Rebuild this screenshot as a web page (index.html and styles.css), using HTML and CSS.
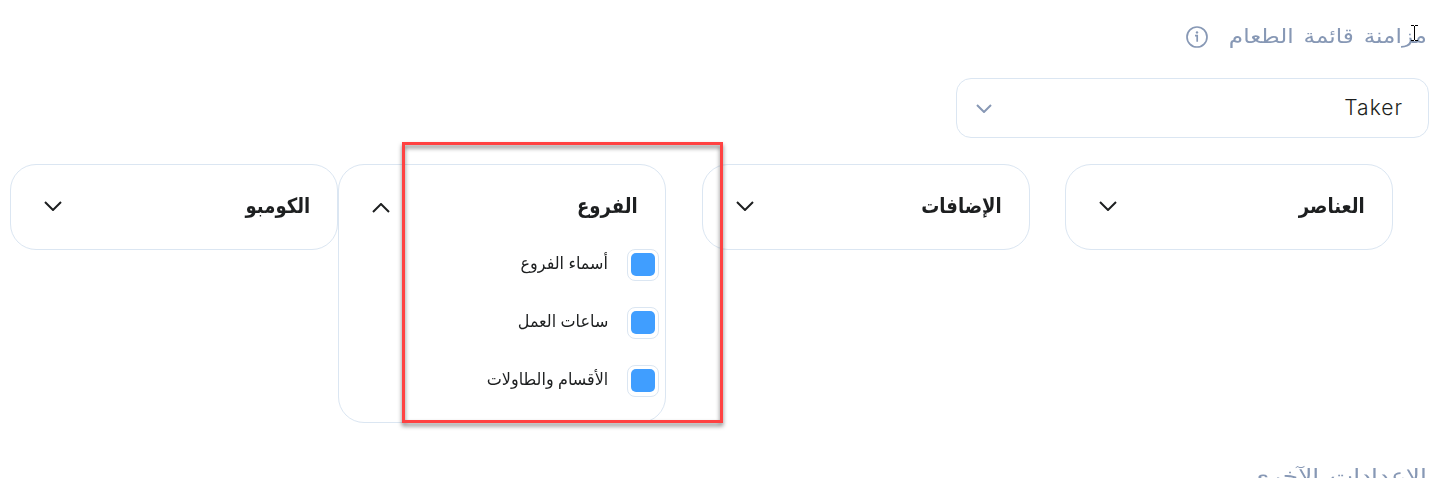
FILE: index.html
```html
<!DOCTYPE html>
<html lang="ar" dir="rtl">
<head>
    <meta charset="UTF-8">
    <meta name="viewport" content="width=device-width, initial-scale=1.0">
    <title>مزامنة قائمة الطعام</title>
    <link rel="stylesheet" href="styles.css">
</head>
<body>
    <main class="settings">
        <h2 class="section-title">
            <span class="section-text menu-text">مزامنة قائمة الطعام</span>
            <svg class="info-icon" viewBox="0 0 22 22">
                <circle cx="11" cy="11" r="10"/>
                <path d="M9 9.7H11.2V15.8"/>
                <circle class="dot" cx="11" cy="6.4" r="1.2"/>
            </svg>
        </h2>

        <div class="select">
            <span class="select-value" dir="ltr">Taker</span>
            <svg class="select-arrow" viewBox="0 0 16 9"><path d="M1 1L8 8L15 1"/></svg>
        </div>

        <div class="cards">
            <section class="card">
                <div class="card-header">
                    <h3 class="card-title">العناصر</h3>
                    <svg class="arrow" viewBox="0 0 18 10"><path d="M1 1L9 9L17 1"/></svg>
                </div>
            </section>
            <section class="card">
                <div class="card-header">
                    <h3 class="card-title">الإضافات</h3>
                    <svg class="arrow" viewBox="0 0 18 10"><path d="M1 1L9 9L17 1"/></svg>
                </div>
            </section>
            <section class="card card-open">
                <div class="card-header">
                    <h3 class="card-title">الفروع</h3>
                    <svg class="arrow arrow-up" viewBox="0 0 18 10"><path d="M1 9L9 1L17 9"/></svg>
                </div>
                <div class="options">
                    <label class="option"><span class="checkbox"></span><span class="option-text">أسماء الفروع</span></label>
                    <label class="option"><span class="checkbox"></span><span class="option-text">ساعات العمل</span></label>
                    <label class="option"><span class="checkbox"></span><span class="option-text">الأقسام والطاولات</span></label>
                </div>
            </section>
            <section class="card">
                <div class="card-header">
                    <h3 class="card-title">الكومبو</h3>
                    <svg class="arrow" viewBox="0 0 18 10"><path d="M1 1L9 9L17 1"/></svg>
                </div>
            </section>
        </div>

        <h2 class="section-title section-other"><span class="section-text other-text">الإعدادات الآخرى</span></h2>
    </main>

    <!-- highlight and text cursor over the page -->
    <div class="highlight"></div>
    <svg class="cursor" viewBox="0 0 7 16"><path d="M0 0.5H3M4 0.5H7M3.5 1V15M0 15.5H3M4 15.5H7"/></svg>
</body>
</html>
```
FILE: styles.css
```css
* {
    box-sizing: border-box;
}
body {
    margin: 0;
    height: 478px;
    overflow: hidden;
    position: relative;
    background-color: #fff;
    color: #1d1f20;
    font-family: "Liberation Sans", "DejaVu Sans", sans-serif;
}
svg {
    fill: none;
    flex: none;
}
.settings {
    padding: 16px 1px 0 10px;
}
.section-title {
    display: flex;
    align-items: center;
    gap: 21px;
    height: 42px;
    margin: 0;
    padding-right: 2px;
    color: #8798b5;
    font-size: 20px;
    font-weight: normal;
    white-space: nowrap;
}
.section-text {
    padding-bottom: 2px;
    word-spacing: 3px;
    transform: scaleX(1.155);
    transform-origin: right center;
}
.menu-text {
    width: 198px;
}
.other-text {
    transform: scaleX(1.24);
}
.info-icon {
    width: 22px;
    height: 22px;
    stroke: #8798b5;
    stroke-width: 1.7;
}
.info-icon .dot {
    fill: #8798b5;
    stroke: none;
}
.select {
    display: flex;
    align-items: center;
    justify-content: space-between;
    width: 473px;
    height: 60px;
    margin-top: 20px;
    padding: 0 25px 0 19px;
    border: 1px solid #dbe6f2;
    border-radius: 15px;
}
.select-value {
    padding-bottom: 1px;
    font-family: Inter, sans-serif;
    font-size: 21px;
    font-weight: 300;
    letter-spacing: 1px;
}
.select-arrow {
    width: 16px;
    height: 9px;
    stroke: #8798b5;
    stroke-width: 2;
}
.cards {
    display: flex;
    align-items: flex-start;
    height: 259px;
    margin-top: 26px;
    padding-right: 36px;
}
.card {
    flex: none;
    width: 328px;
    min-height: 86px;
    margin-left: 35px;
    border: 1px solid #dbe6f2;
    border-radius: 26px;
}
.card:nth-child(2) {
    margin-left: 36px;
}
.card:nth-child(n+3) {
    margin-left: 0;
}
.card-open {
    height: 259px;
}
.card-header {
    display: flex;
    align-items: center;
    justify-content: space-between;
    height: 82px;
    margin-bottom: 2px;
    padding: 0 27px 0 33px;
}
.card-title {
    margin: 0;
    font-size: 21px;
    font-weight: bold;
    transform: scaleX(0.86);
    transform-origin: right center;
}
.arrow {
    width: 18px;
    height: 10px;
    stroke: #1d1f20;
    stroke-width: 2;
}
.arrow-up {
    margin-top: 3px;
}
.options {
    display: flex;
    flex-direction: column;
    gap: 26px;
    padding-right: 6px;
}
.option {
    display: flex;
    align-items: center;
    gap: 19px;
    height: 32px;
    font-size: 17px;
}
.option-text {
    padding-bottom: 3px;
    transform: scaleX(0.94);
    transform-origin: right center;
}
.checkbox {
    flex: none;
    width: 32px;
    height: 32px;
    padding: 3px;
    border: 1px solid #dbe6f2;
    border-radius: 8px;
}
.checkbox::before {
    content: "";
    display: block;
    height: 23px;
    border-radius: 5px;
    background-color: #409eff;
}
.section-other {
    margin-top: 33px;
}
.highlight {
    position: absolute;
    left: 402px;
    top: 142px;
    width: 321px;
    height: 281px;
    border: 3px solid #ff4242;
    filter: drop-shadow(0 3px 2px rgba(0, 0, 0, 0.5));
}
.cursor {
    position: absolute;
    left: 1411px;
    top: 25px;
    width: 7px;
    height: 16px;
    stroke: #000;
    stroke-width: 1;
    shape-rendering: crispEdges;
}
```
